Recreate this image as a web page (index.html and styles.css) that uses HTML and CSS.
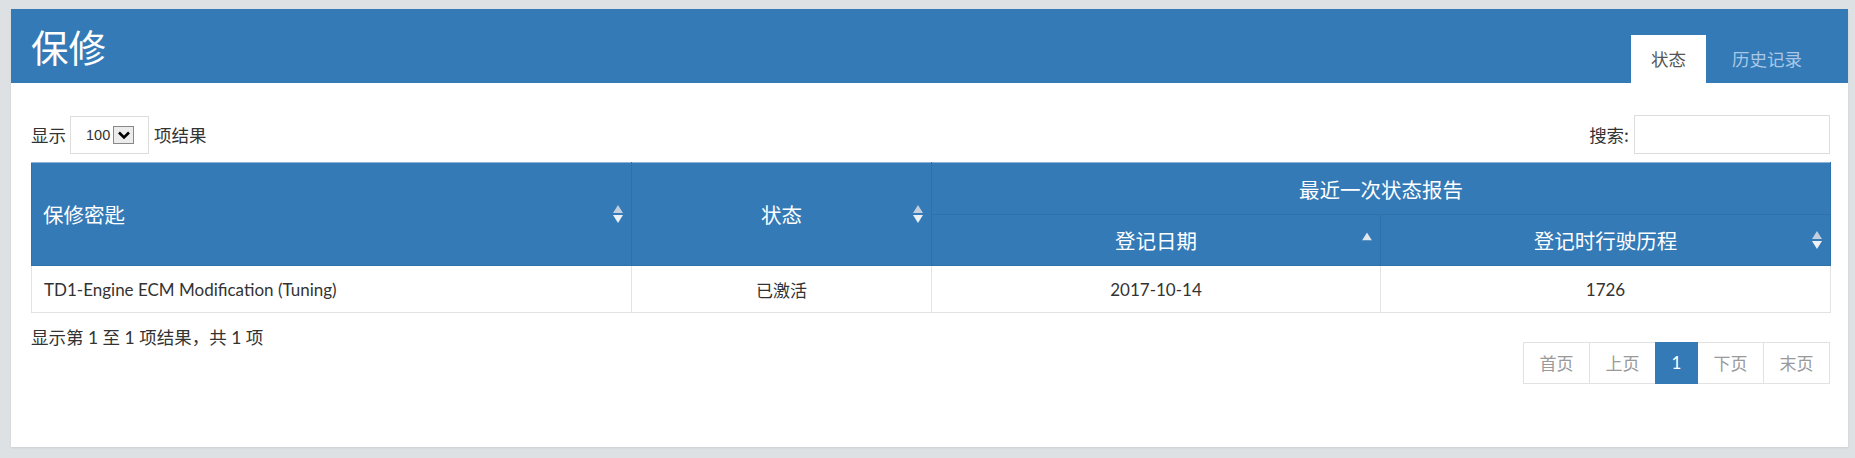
FILE: index.html
```html
<!DOCTYPE html>
<html lang="zh-CN">
<head>
<meta charset="utf-8">
<title>保修</title>
<link rel="stylesheet" href="styles.css">
</head>
<body>
<div class="panel">
  <div class="panel-head">
    <h1 class="title">保修</h1>
    <ul class="tabs">
      <li class="tab active">状态</li>
      <li class="tab">历史记录</li>
    </ul>
  </div>
  <div class="panel-body">
    <div class="controls">
      <div class="length">
        <span>显示</span>
        <div class="select">
          <span class="select-val">100</span>
          <span class="select-btn"><svg width="14" height="10" viewBox="0 0 14 10"><path d="M2 2.5 L7 7.5 L12 2.5" fill="none" stroke="#000" stroke-width="2.6"/></svg></span>
        </div>
        <span>项结果</span>
      </div>
      <div class="search">
        <span>搜索:</span>
        <input class="search-input" type="text">
      </div>
    </div>
    <table class="grid">
      <colgroup>
        <col class="c1"><col class="c2"><col class="c3"><col class="c4">
      </colgroup>
      <thead>
        <tr class="h1">
          <th rowspan="2" class="left">保修密匙<span class="sort both"><svg width="10" height="18" viewBox="0 0 10 18"><path d="M5 0 L10 8 H0Z" fill="#c3cfdd"/><path d="M5 18 L10 10 H0Z" fill="#eef2f7"/></svg></span></th>
          <th rowspan="2">状态<span class="sort both"><svg width="10" height="18" viewBox="0 0 10 18"><path d="M5 0 L10 8 H0Z" fill="#c3cfdd"/><path d="M5 18 L10 10 H0Z" fill="#eef2f7"/></svg></span></th>
          <th colspan="2">最近一次状态报告</th>
        </tr>
        <tr class="h2">
          <th>登记日期<span class="sort asc"><svg width="10" height="8" viewBox="0 0 10 8"><path d="M5 0 L10 8 H0Z" fill="#e2e7ee"/></svg></span></th>
          <th>登记时行驶历程<span class="sort both"><svg width="10" height="18" viewBox="0 0 10 18"><path d="M5 0 L10 8 H0Z" fill="#c3cfdd"/><path d="M5 18 L10 10 H0Z" fill="#eef2f7"/></svg></span></th>
        </tr>
      </thead>
      <tbody>
        <tr>
          <td class="left">TD1-Engine ECM Modification (Tuning)</td>
          <td>已激活</td>
          <td>2017-10-14</td>
          <td>1726</td>
        </tr>
      </tbody>
    </table>
    <div class="footer">
      <div class="info">显示第 1 至 1 项结果，共 1 项</div>
      <ul class="pager">
        <li class="pg disabled">首页</li>
        <li class="pg disabled">上页</li>
        <li class="pg current">1</li>
        <li class="pg disabled">下页</li>
        <li class="pg disabled">末页</li>
      </ul>
    </div>
  </div>
</div>
</body>
</html>
```

FILE: styles.css
```css
html, body {
  margin: 0;
  padding: 0;
}
body {
  background: #dde1e4;
  padding: 9px 7px 11px 11px;
  font-family: Lato, "Noto Sans CJK SC", sans-serif;
  font-size: 17.5px;
  color: #333;
}
.panel {
  background: #fff;
  height: 438px;
  box-shadow: 0 1px 2px rgba(0,0,0,0.08);
}
.panel-head {
  background: #337ab7;
  height: 74px;
  display: flex;
  justify-content: space-between;
  align-items: flex-end;
  padding: 0 26px 0 20px;
}
.title {
  align-self: center;
  margin: 0;
  color: #fff;
  font-size: 37.5px;
  font-weight: normal;
  line-height: 1;
  font-family: "Noto Sans CJK SC", sans-serif;
}
.tabs {
  display: flex;
  gap: 6px;
  margin: 0;
  padding: 0;
  list-style: none;
}
.tab {
  height: 48px;
  line-height: 48px;
  padding: 0 20px;
  color: #a9c7e6;
  font-size: 17.5px;
  font-family: "Noto Sans CJK SC", sans-serif;
}
.tab.active {
  background: #fff;
  color: #555;
}
.panel-body {
  padding: 0 18px 0 20px;
}
.controls {
  margin-top: 32px;
  height: 39px;
  display: flex;
  justify-content: space-between;
  align-items: center;
}
.length, .search {
  display: flex;
  align-items: center;
  font-family: "Noto Sans CJK SC", sans-serif;
  font-size: 17.5px;
}
.select {
  width: 79px;
  height: 38px;
  box-sizing: border-box;
  border: 1px solid #ddd;
  margin: 0 5px 0 4px;
  display: flex;
  align-items: center;
  padding-left: 15px;
}
.select-val {
  font-family: "Liberation Sans", sans-serif;
  font-size: 14.5px;
  color: #333;
}
.select-btn {
  width: 21px;
  height: 18px;
  box-sizing: border-box;
  margin-left: 3px;
  border: 1px solid #888;
  background: #ececec;
  display: flex;
  align-items: center;
  justify-content: center;
}
.search-input {
  width: 196px;
  height: 39px;
  box-sizing: border-box;
  border: 1px solid #ddd;
  margin: 0 0 0 5px;
  padding: 0 8px;
  outline: none;
}
.grid {
  margin-top: 8px;
  width: 1799px;
  border-collapse: collapse;
  table-layout: fixed;
}
.c1 { width: 600px; }
.c2 { width: 300px; }
.c3 { width: 449px; }
.c4 { width: 450px; }
.grid th {
  position: relative;
  background: #337ab7;
  color: #fff;
  font-weight: normal;
  font-family: "Noto Sans CJK SC", sans-serif;
  font-size: 20.5px;
  text-align: center;
  border: 1px solid #2f71aa;
  padding: 0 10px;
}
.grid thead tr.h1 th {
  border-top-color: #8fb3d6;
}
.grid tr.h1 { height: 52px; }
.grid tr.h2 { height: 51px; }
.grid th.left { text-align: left; padding-left: 11px; }
.sort {
  position: absolute;
  top: 50%;
  line-height: 0;
  transform: translateY(-50%);
}
.sort.both { right: 8px; }
.grid tr.h2 th .sort.asc { right: 8px; margin-top: -4px; }
.grid td {
  height: 47px;
  box-sizing: border-box;
  border: 1px solid #e3e3e3;
  text-align: center;
  padding: 0 10px;
  font-size: 17px;
  color: #333;
}
.grid td.left { text-align: left; padding-left: 12px; }
.footer {
  display: flex;
  justify-content: space-between;
  align-items: flex-start;
  margin-top: 12px;
}
.info {
  line-height: 25px;
  font-size: 17.5px;
}
.pager {
  display: flex;
  margin: 17px 0 0 0;
  padding: 0;
  list-style: none;
}
.pg {
  height: 42px;
  box-sizing: border-box;
  line-height: 40px;
  width: 67px;
  text-align: center;
  border: 1px solid #e2e2e2;
  margin-left: -1px;
  color: #9a9a9a;
  font-size: 17px;
  font-family: "Noto Sans CJK SC", sans-serif;
}
.pg.current {
  width: 43px;
  background: #337ab7;
  border-color: #337ab7;
  color: #fff;
  font-family: Lato, sans-serif;
  position: relative;
}
```
